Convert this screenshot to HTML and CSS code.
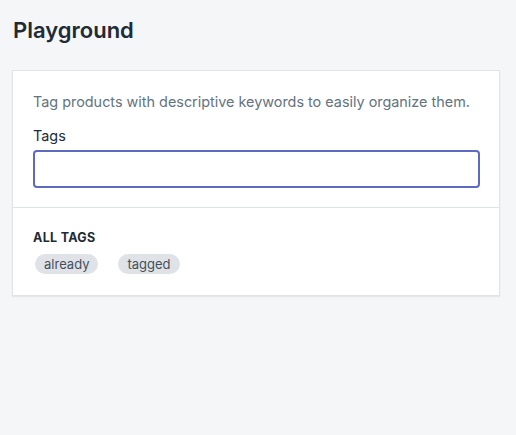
FILE: index.html
```html
<!DOCTYPE html>
<html>
<head>
    <meta charset="utf-8"/>
    <title>Playground</title>
    <link rel="stylesheet" href="styles.css">
</head>
<body>

<div class="page">
    <h1 class="page-title">Playground</h1>

    <div class="card">
        <div class="card-section">
            <p class="help-text">Tag products with descriptive keywords to easily organize them.</p>
            <label class="field-label" for="tagInput">Tags</label>
            <input id="tagInput" class="text-field" type="text"/>
        </div>
        <div class="card-section">
            <h2 class="subheading">All tags</h2>
            <ul class="tag-list">
                <li class="tag">already</li>
                <li class="tag">tagged</li>
            </ul>
        </div>
    </div>
</div>

</body>
</html>
```

FILE: styles.css
```css
body {
    margin: 0;
    background: #f4f6f8;
    color: #212b36;
    font-family: Inter, "Noto Sans", sans-serif;
}

.page {
    padding: 14px 16px 20px 12px;
}

.page-title {
    margin: 0 0 24px 1px;
    font-size: 22px;
    font-weight: 600;
    line-height: 32px;
}

.card {
    background: #fff;
    border: 1px solid #e1e3e5;
    box-shadow: 0 1px 1px rgba(63, 63, 68, 0.08);
}

.card-section {
    padding: 21px 19px 19px 20px;
}

.card-section + .card-section {
    border-top: 1px solid #dfe3e8;
    padding-top: 22px;
    padding-bottom: 21px;
}

.help-text {
    margin: 0 0 14px;
    font-size: 14.4px;
    line-height: 20px;
    color: #637381;
}

.field-label {
    display: block;
    margin-bottom: 4px;
    font-size: 14.4px;
    line-height: 20px;
}

.text-field {
    display: block;
    box-sizing: border-box;
    width: 100%;
    height: 38px;
    margin: 0;
    border: 2px solid #5c6ac4;
    border-radius: 4px;
    font-family: inherit;
    font-size: 14px;
    outline: none;
}

.subheading {
    margin: 0 0 8px;
    font-size: 12.5px;
    font-weight: 700;
    letter-spacing: 0.3px;
    line-height: 16px;
    text-transform: uppercase;
}

.tag-list {
    display: flex;
    gap: 20px;
    list-style: none;
    margin: 0;
    padding: 0 0 0 2px;
}

.tag {
    padding: 0 9px;
    border-radius: 10px;
    background: #dfe3e8;
    color: #454f5b;
    font-size: 13px;
    line-height: 20px;
}
```
